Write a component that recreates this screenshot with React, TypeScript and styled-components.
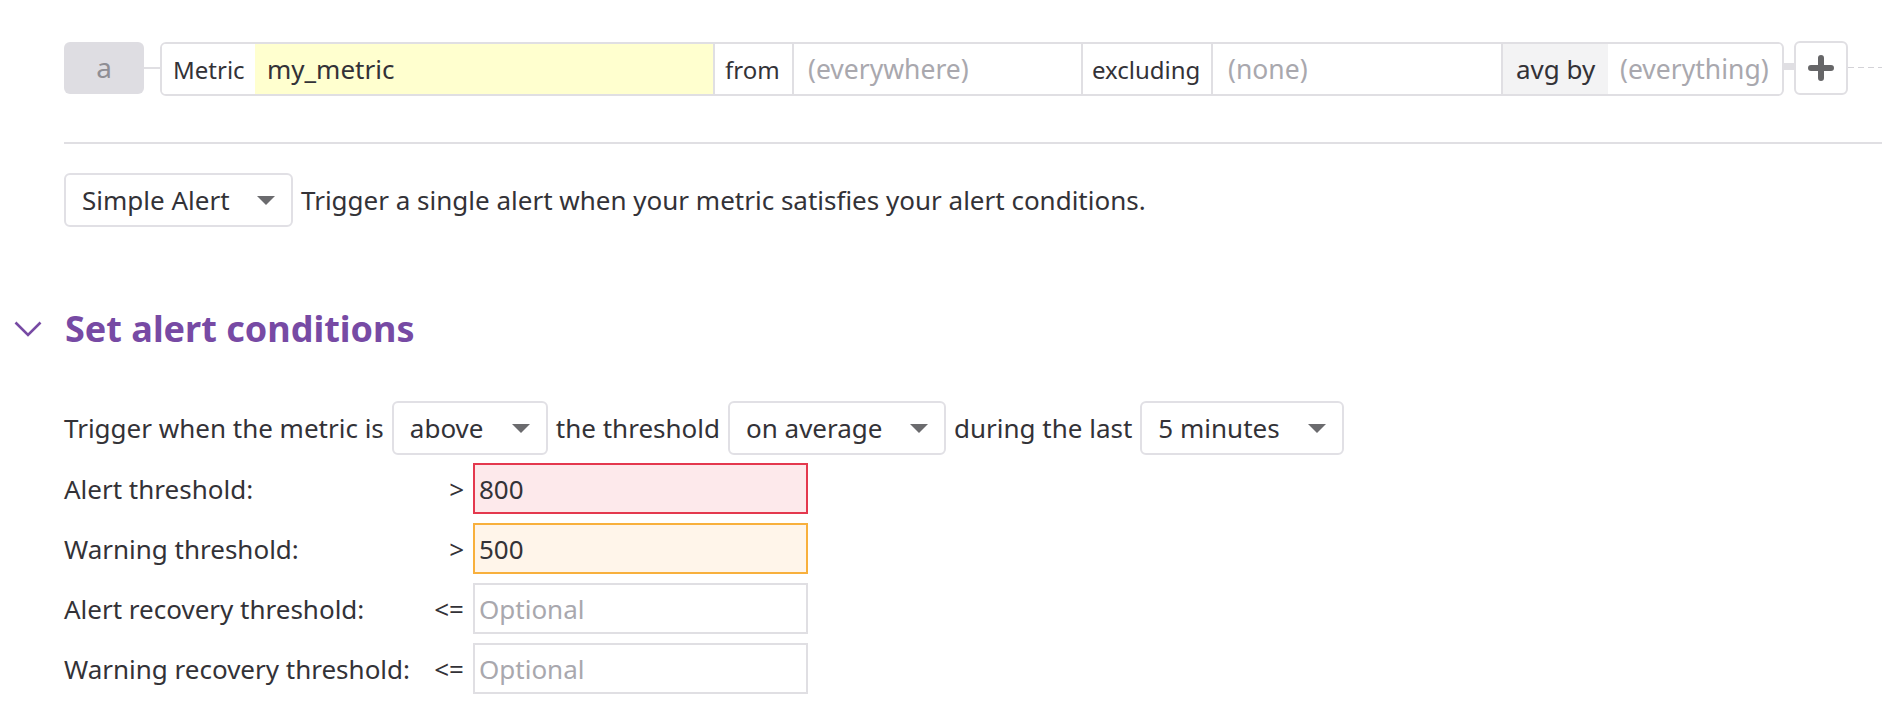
import styled, { createGlobalStyle } from 'styled-components';

const GlobalStyle = createGlobalStyle`
  body {
    margin: 0;
    background: #ffffff;
    font-family: "Noto Sans", "Open Sans", sans-serif;
    color: #333237;
  }
`;

const segments = [
  { text: 'Metric', w: 93, pad: 11, size: 24 },
  { text: 'my_metric', w: 458, pad: 12, size: 26, bg: '#ffffcf' },
  { text: 'from', w: 79, pad: 10, size: 24, divider: true },
  { text: '(everywhere)', w: 289, pad: 14, size: 26.5, divider: true, muted: true },
  { text: 'excluding', w: 130, pad: 9, size: 24, divider: true },
  { text: '(none)', w: 290, pad: 15, size: 26.5, divider: true, muted: true },
  { text: 'avg by', w: 107, pad: 13, size: 26, divider: true, bg: '#f3f3f4' },
  { text: '(everything)', w: 173, pad: 12, size: 26.5, muted: true },
];

const thresholds = [
  { label: 'Alert threshold:', op: '>', value: '800', tone: 'alert' as const },
  { label: 'Warning threshold:', op: '>', value: '500', tone: 'warning' as const },
  { label: 'Alert recovery threshold:', op: '<=', value: '', tone: 'none' as const },
  { label: 'Warning recovery threshold:', op: '<=', value: '', tone: 'none' as const },
];

function Caret() {
  return (
    <svg width="18" height="9" viewBox="0 0 18 9">
      <polygon points="0,0 18,0 9,9" fill="#6b6b6e" />
    </svg>
  );
}

export default function App() {
  return (
    <>
      <GlobalStyle />
      <Page>
        <Section>
          <QueryRow>
            <QueryName>a</QueryName>
            <NameLink />
            <QueryBar>
              {segments.map((s) => (
                <Segment
                  key={s.text}
                  $w={s.w}
                  $pad={s.pad}
                  $size={s.size}
                  $bg={s.bg}
                  $divider={s.divider}
                  $muted={s.muted}
                >
                  {s.text}
                </Segment>
              ))}
            </QueryBar>
            <BarLink />
            <AddButton>
              <svg width="26" height="26" viewBox="0 0 26 26">
                <path d="M13 3v20M3 13h20" stroke="#666668" strokeWidth="6" strokeLinecap="round" />
              </svg>
            </AddButton>
            <DashLine />
          </QueryRow>

          <Rule />

          <InlineRow $top={29}>
            <Select $w={229}>
              Simple Alert
              <Caret />
            </Select>
            <span>Trigger a single alert when your metric satisfies your alert conditions.</span>
          </InlineRow>
        </Section>

        <Heading>
          <svg width="28" height="16" viewBox="0 0 28 16">
            <path d="M1.5 1.5 L14 14 L26.5 1.5" fill="none" stroke="#774aa4" strokeWidth="2.6" />
          </svg>
          <span>Set alert conditions</span>
        </Heading>

        <Section>
          <InlineRow $top={48}>
            <span>Trigger when the metric is</span>
            <Select $w={156}>
              above
              <Caret />
            </Select>
            <span>the threshold</span>
            <Select $w={218}>
              on average
              <Caret />
            </Select>
            <span>during the last</span>
            <Select $w={204}>
              5 minutes
              <Caret />
            </Select>
          </InlineRow>

          <Thresholds>
            {thresholds.map((t) => (
              <ThresholdRow key={t.label}>
                <span>{t.label}</span>
                <Operator>{t.op}</Operator>
                <ThresholdInput $tone={t.tone} $empty={!t.value}>
                  {t.value || 'Optional'}
                </ThresholdInput>
              </ThresholdRow>
            ))}
          </Thresholds>
        </Section>
      </Page>
    </>
  );
}

const Page = styled.div`
  padding: 0 0 40px 14px;
  overflow: hidden;
  font-size: 26px;
`;

const Section = styled.div`
  padding-left: 50px;
`;

const QueryRow = styled.div`
  display: flex;
  align-items: flex-start;
  padding-top: 42px;
`;

const QueryName = styled.div`
  width: 80px;
  height: 52px;
  border-radius: 6px;
  background: #dedde2;
  color: #8f8e94;
  font-size: 28px;
  display: flex;
  align-items: center;
  justify-content: center;
  padding-bottom: 3px;
  box-sizing: border-box;
`;

const NameLink = styled.div`
  width: 16px;
  height: 2px;
  margin-top: 25px;
  background: #e0dfe3;
`;

const QueryBar = styled.div`
  display: flex;
  width: 1624px;
  height: 54px;
  box-sizing: border-box;
  border: 2px solid #e0dfe3;
  border-radius: 6px;
  overflow: hidden;
  flex-shrink: 0;
`;

const Segment = styled.div<{
  $w: number;
  $pad: number;
  $size: number;
  $bg?: string;
  $divider?: boolean;
  $muted?: boolean;
}>`
  width: ${(p) => p.$w}px;
  flex-shrink: 0;
  box-sizing: border-box;
  display: flex;
  align-items: center;
  padding-left: ${(p) => p.$pad}px;
  font-size: ${(p) => p.$size}px;
  background: ${(p) => p.$bg || '#ffffff'};
  border-left: ${(p) => (p.$divider ? '2px solid #e0dfe3' : 'none')};
  color: ${(p) => (p.$muted ? '#a9a8ae' : '#333237')};
  white-space: nowrap;
`;

const BarLink = styled.div`
  width: 10px;
  height: 7px;
  margin-top: 21px;
  background: #e0dfe3;
`;

const AddButton = styled.div`
  width: 54px;
  height: 54px;
  margin-top: -1px;
  box-sizing: border-box;
  border: 2px solid #e0dfe3;
  border-radius: 6px;
  display: flex;
  align-items: center;
  justify-content: center;
  flex-shrink: 0;
`;

const DashLine = styled.div`
  flex: 1;
  height: 1px;
  margin-top: 25px;
  background: repeating-linear-gradient(90deg, #d3d2d7 0 6px, transparent 6px 10px);
`;

const Rule = styled.div`
  height: 2px;
  margin-top: 46px;
  background: #e0dfe3;
`;

const InlineRow = styled.div<{ $top: number }>`
  display: flex;
  align-items: center;
  gap: 8px;
  margin-top: ${(p) => p.$top}px;
  white-space: nowrap;
`;

const Select = styled.div<{ $w: number }>`
  width: ${(p) => p.$w}px;
  height: 54px;
  box-sizing: border-box;
  border: 2px solid #e1e0e5;
  border-radius: 6px;
  background: #ffffff;
  display: flex;
  align-items: center;
  justify-content: space-between;
  padding: 0 16px 0 16px;
  flex-shrink: 0;
`;

const Heading = styled.div`
  display: flex;
  align-items: center;
  gap: 23px;
  margin-top: 78px;
  height: 48px;
  color: #774aa4;
  font-size: 36px;
  font-weight: 700;
  line-height: 48px;
`;

const Thresholds = styled.div`
  display: flex;
  flex-direction: column;
  gap: 9px;
  margin-top: 8px;
`;

const ThresholdRow = styled.div`
  display: grid;
  grid-template-columns: 360px 49px 335px;
  align-items: center;
`;

const Operator = styled.span`
  text-align: right;
  padding-right: 9px;
`;

const tones = {
  alert: { border: '#e4384e', bg: '#fde9eb' },
  warning: { border: '#f8b03d', bg: '#fff5ea' },
  none: { border: '#e0dfe3', bg: '#ffffff' },
};

const ThresholdInput = styled.div<{ $tone: keyof typeof tones; $empty: boolean }>`
  height: 51px;
  box-sizing: border-box;
  border: 2px solid ${(p) => tones[p.$tone].border};
  background: ${(p) => tones[p.$tone].bg};
  color: ${(p) => (p.$empty ? '#a9a8ae' : '#333237')};
  display: flex;
  align-items: center;
  padding-left: 4px;
`;
